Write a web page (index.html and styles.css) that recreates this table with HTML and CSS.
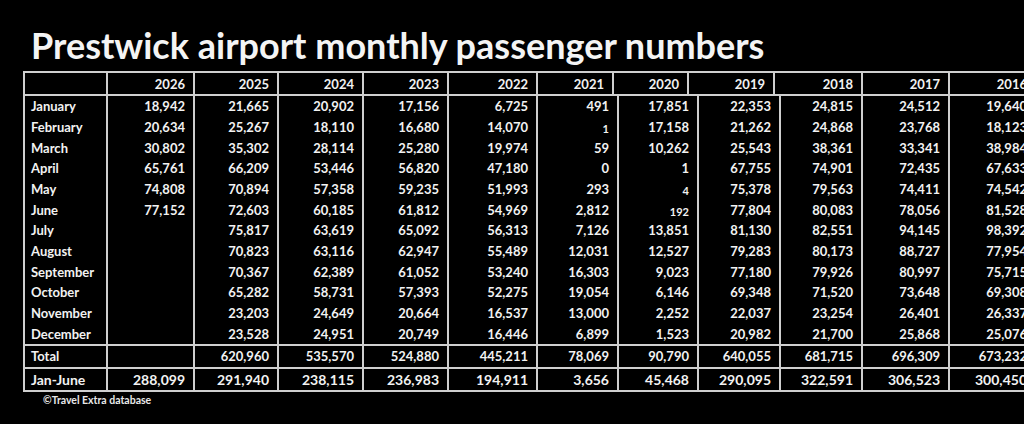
FILE: index.html
```html
<!DOCTYPE html>
<html lang="en">
<head>
<meta charset="utf-8">
<title>Prestwick airport monthly passenger numbers</title>
<link rel="stylesheet" href="styles.css">
</head>
<body>
<div class="page">
  <h1 class="title">Prestwick airport monthly passenger numbers</h1>
  <div class="sheet">
    <div class="hrow">
      <div class="c lab"></div>
      <div class="c">2026</div><div class="c">2025</div><div class="c">2024</div><div class="c">2023</div><div class="c">2022</div><div class="c">2021</div><div class="c">2020</div><div class="c">2019</div><div class="c">2018</div><div class="c">2017</div><div class="c">2016</div>
    </div>
    <div class="months">
      <div class="row"><div class="c lab">January</div><div class="c">18,942</div><div class="c">21,665</div><div class="c">20,902</div><div class="c">17,156</div><div class="c">6,725</div><div class="c">491</div><div class="c">17,851</div><div class="c">22,353</div><div class="c">24,815</div><div class="c">24,512</div><div class="c">19,640</div></div>
      <div class="row"><div class="c lab">February</div><div class="c">20,634</div><div class="c">25,267</div><div class="c">18,110</div><div class="c">16,680</div><div class="c">14,070</div><div class="c small">1</div><div class="c">17,158</div><div class="c">21,262</div><div class="c">24,868</div><div class="c">23,768</div><div class="c">18,123</div></div>
      <div class="row"><div class="c lab">March</div><div class="c">30,802</div><div class="c">35,302</div><div class="c">28,114</div><div class="c">25,280</div><div class="c">19,974</div><div class="c">59</div><div class="c">10,262</div><div class="c">25,543</div><div class="c">38,361</div><div class="c">33,341</div><div class="c">38,984</div></div>
      <div class="row"><div class="c lab">April</div><div class="c">65,761</div><div class="c">66,209</div><div class="c">53,446</div><div class="c">56,820</div><div class="c">47,180</div><div class="c">0</div><div class="c">1</div><div class="c">67,755</div><div class="c">74,901</div><div class="c">72,435</div><div class="c">67,633</div></div>
      <div class="row"><div class="c lab">May</div><div class="c">74,808</div><div class="c">70,894</div><div class="c">57,358</div><div class="c">59,235</div><div class="c">51,993</div><div class="c">293</div><div class="c small">4</div><div class="c">75,378</div><div class="c">79,563</div><div class="c">74,411</div><div class="c">74,542</div></div>
      <div class="row"><div class="c lab">June</div><div class="c">77,152</div><div class="c">72,603</div><div class="c">60,185</div><div class="c">61,812</div><div class="c">54,969</div><div class="c">2,812</div><div class="c small">192</div><div class="c">77,804</div><div class="c">80,083</div><div class="c">78,056</div><div class="c">81,528</div></div>
      <div class="row"><div class="c lab">July</div><div class="c"></div><div class="c">75,817</div><div class="c">63,619</div><div class="c">65,092</div><div class="c">56,313</div><div class="c">7,126</div><div class="c">13,851</div><div class="c">81,130</div><div class="c">82,551</div><div class="c">94,145</div><div class="c">98,392</div></div>
      <div class="row"><div class="c lab">August</div><div class="c"></div><div class="c">70,823</div><div class="c">63,116</div><div class="c">62,947</div><div class="c">55,489</div><div class="c">12,031</div><div class="c">12,527</div><div class="c">79,283</div><div class="c">80,173</div><div class="c">88,727</div><div class="c">77,954</div></div>
      <div class="row"><div class="c lab">September</div><div class="c"></div><div class="c">70,367</div><div class="c">62,389</div><div class="c">61,052</div><div class="c">53,240</div><div class="c">16,303</div><div class="c">9,023</div><div class="c">77,180</div><div class="c">79,926</div><div class="c">80,997</div><div class="c">75,715</div></div>
      <div class="row"><div class="c lab">October</div><div class="c"></div><div class="c">65,282</div><div class="c">58,731</div><div class="c">57,393</div><div class="c">52,275</div><div class="c">19,054</div><div class="c">6,146</div><div class="c">69,348</div><div class="c">71,520</div><div class="c">73,648</div><div class="c">69,308</div></div>
      <div class="row"><div class="c lab">November</div><div class="c"></div><div class="c">23,203</div><div class="c">24,649</div><div class="c">20,664</div><div class="c">16,537</div><div class="c">13,000</div><div class="c">2,252</div><div class="c">22,037</div><div class="c">23,254</div><div class="c">26,401</div><div class="c">26,337</div></div>
      <div class="row"><div class="c lab">December</div><div class="c"></div><div class="c">23,528</div><div class="c">24,951</div><div class="c">20,749</div><div class="c">16,446</div><div class="c">6,899</div><div class="c">1,523</div><div class="c">20,982</div><div class="c">21,700</div><div class="c">25,868</div><div class="c">25,076</div></div>
    </div>
    <div class="row sum"><div class="c lab">Total</div><div class="c"></div><div class="c">620,960</div><div class="c">535,570</div><div class="c">524,880</div><div class="c">445,211</div><div class="c">78,069</div><div class="c">90,790</div><div class="c">640,055</div><div class="c">681,715</div><div class="c">696,309</div><div class="c">673,232</div></div>
    <div class="row sum half"><div class="c lab">Jan-June</div><div class="c">288,099</div><div class="c">291,940</div><div class="c">238,115</div><div class="c">236,983</div><div class="c">194,911</div><div class="c">3,656</div><div class="c">45,468</div><div class="c">290,095</div><div class="c">322,591</div><div class="c">306,523</div><div class="c">300,450</div></div>
  </div>
  <p class="credit">©Travel Extra database</p>
</div>
</body>
</html>
```

FILE: styles.css
```css
html, body {
  margin: 0;
  padding: 0;
  background: #000;
}

body {
  width: 1024px;
  height: 424px;
  overflow: hidden;
  color: #f2f2f2;
  font-family: Lato, "Open Sans", "Liberation Sans", sans-serif;
  font-weight: 700;
}

.page {
  width: 1024px;
  overflow: hidden;
}

.title {
  margin: 0;
  padding: 24px 0 0 31px;
  font-size: 36px;
  line-height: 43px;
  font-weight: 700;
  color: #f4f4f4;
  white-space: nowrap;
}

.sheet {
  margin: 4px 0 0 23px;
  width: 1020px;
  border-top: 2px solid #cfcfcf;
  border-bottom: 2px solid #cfcfcf;
  font-size: 13px;
}

.hrow,
.row {
  display: grid;
  align-items: stretch;
}

.hrow {
  grid-template-columns: 83px 87px 84px 85px 85px 89px 76px 75px 86px 88px 87px 87px;
  height: 21px;
  border-bottom: 2px solid #cfcfcf;
}

.row {
  grid-template-columns: 83px 87px 84px 85px 85px 89px 81px 80px 82px 82px 87px 87px;
  height: 20.67px;
}

.sum {
  height: 21px;
  border-top: 2px solid #cfcfcf;
}

.half {
  font-size: 14px;
}

.c {
  box-sizing: border-box;
  border-left: 2px solid #cfcfcf;
  padding: 0 8px 0 6px;
  text-align: right;
  display: flex;
  align-items: center;
  justify-content: flex-end;
  white-space: nowrap;
}

.c.lab {
  justify-content: flex-start;
  text-align: left;
}

.c.small {
  font-size: 11px;
  padding-top: 3px;
}

.credit {
  margin: 2px 0 0 43px;
  font-size: 10.5px;
  line-height: 13px;
  color: #e8e8e8;
}
```
